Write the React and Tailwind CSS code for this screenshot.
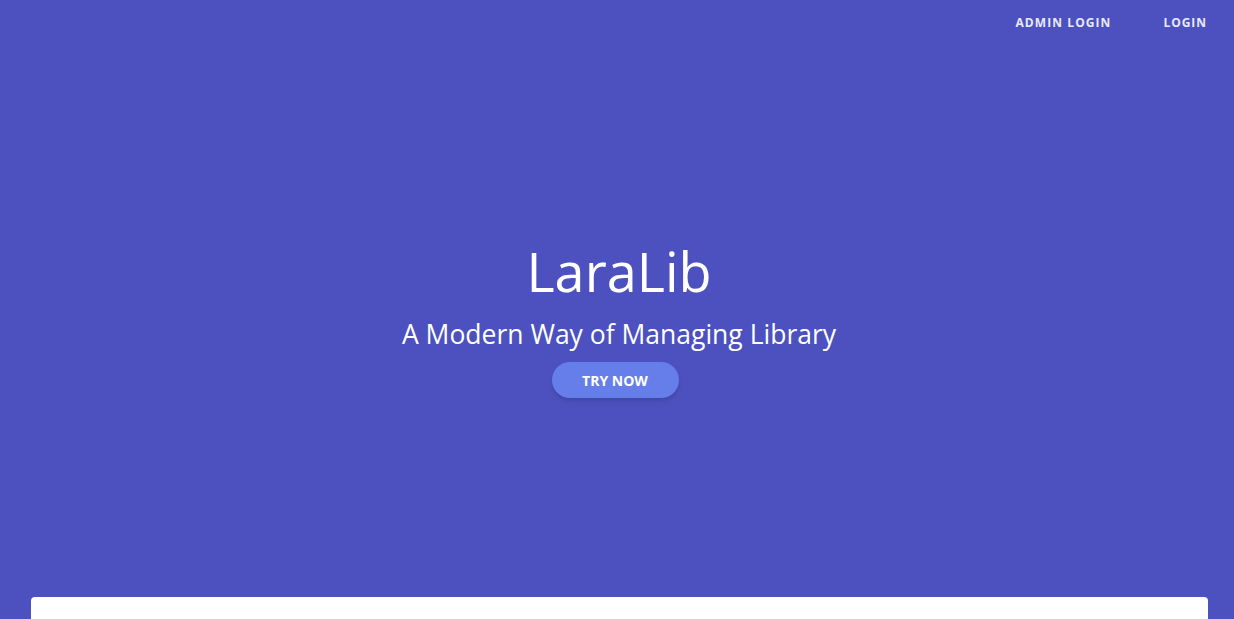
import React from 'react';

const App = () => {
  return (
    <div className="min-h-screen bg-[#4c51bf] font-['Open_Sans','Noto_Sans',sans-serif] text-white overflow-hidden">
      {/* Nav */}
      <nav className="flex justify-end items-center h-[45px] pr-[27px]">
        <a href="#" className="text-[12px] font-bold tracking-[0.09em] text-[#e8eafc] mr-[52px]">
          ADMIN LOGIN
        </a>
        <a href="#" className="text-[12px] font-bold tracking-[0.08em] text-[#e8eafc]">
          LOGIN
        </a>
      </nav>

      {/* Hero */}
      <div className="flex flex-col items-center pt-[190px]">
        <h1 className="pl-[4px] text-[54px] leading-[72px] font-normal">LaraLib</h1>
        <p className="pl-[4px] text-[26.5px] leading-[36px] mt-[9px]">A Modern Way of Managing Library</p>
        <button className="mt-[10px] mr-[4px] w-[127px] h-[36px] rounded-full bg-[#667eea] text-[14px] font-bold shadow-md">
          TRY NOW
        </button>
      </div>

      {/* Content card */}
      <div className="ml-[31px] mr-[26px] mt-[199px] h-[200px] bg-white rounded-t"></div>
    </div>
  );
};

export default App;
